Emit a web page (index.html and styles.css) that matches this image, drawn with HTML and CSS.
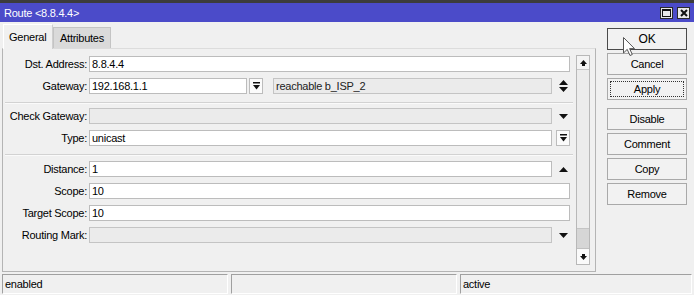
FILE: index.html
```html
<!DOCTYPE html>
<html>
<head>
<meta charset="utf-8">
<title>Route</title>
<link rel="stylesheet" href="styles.css">
</head>
<body>
<div class="window">
  <div class="topstrip"></div>
  <div class="titlebar">
    <span class="title">Route &lt;8.8.4.4&gt;</span>
    <div class="tb-btns">
      <span class="tb-btn"><svg width="9" height="8" viewBox="0 0 9 8"><rect x="0.5" y="0.5" width="8" height="7" fill="none" stroke="#111" stroke-width="1"/><rect x="0" y="0" width="9" height="2" fill="#111"/></svg></span>
      <span class="tb-btn"><svg width="8" height="8" viewBox="0 0 8 8"><path d="M1 1 L7 7 M7 1 L1 7" stroke="#111" stroke-width="2"/></svg></span>
    </div>
  </div>
  <div class="body">
    <div class="left">
      <div class="tabs">
        <div class="tab active">General</div>
        <div class="tab">Attributes</div>
      </div>
      <div class="panel">
        <div class="form">
          <div class="row">
            <label class="lbl">Dst. Address:</label>
            <div class="inp full">8.8.4.4</div>
          </div>
          <div class="row">
            <label class="lbl">Gateway:</label>
            <div class="inp gw">192.168.1.1</div>
            <div class="dd dd-gw"><svg width="7" height="8" viewBox="0 0 7 8"><rect x="0" y="0" width="7" height="1.5" fill="#111"/><path d="M0 3 H7 L3.5 7.5 Z" fill="#111"/></svg></div>
            <div class="inp dis reach">reachable b_ISP_2</div>
            <div class="ico"><svg width="9" height="12" viewBox="0 0 9 12"><path d="M0 5 H9 L4.5 0 Z M0 7 H9 L4.5 12 Z" fill="#111"/></svg></div>
          </div>
          <div class="sep sep1"></div>
          <div class="row">
            <label class="lbl">Check Gateway:</label>
            <div class="inp dis mid"></div>
            <div class="ico"><svg width="9" height="5" viewBox="0 0 9 5"><path d="M0 0 H9 L4.5 5 Z" fill="#111"/></svg></div>
          </div>
          <div class="row">
            <label class="lbl">Type:</label>
            <div class="inp mid">unicast</div>
            <div class="dd dd-type"><svg width="7" height="8" viewBox="0 0 7 8"><rect x="0" y="0" width="7" height="1.5" fill="#111"/><path d="M0 3 H7 L3.5 7.5 Z" fill="#111"/></svg></div>
          </div>
          <div class="sep sep2"></div>
          <div class="row">
            <label class="lbl">Distance:</label>
            <div class="inp mid">1</div>
            <div class="ico"><svg width="9" height="5" viewBox="0 0 9 5"><path d="M0 5 H9 L4.5 0 Z" fill="#111"/></svg></div>
          </div>
          <div class="row">
            <label class="lbl">Scope:</label>
            <div class="inp full">10</div>
          </div>
          <div class="row">
            <label class="lbl">Target Scope:</label>
            <div class="inp full">10</div>
          </div>
          <div class="row">
            <label class="lbl">Routing Mark:</label>
            <div class="inp dis mid"></div>
            <div class="ico"><svg width="9" height="5" viewBox="0 0 9 5"><path d="M0 0 H9 L4.5 5 Z" fill="#111"/></svg></div>
          </div>
        </div>
        <div class="scroll">
          <div class="sb-btn sb-up"><svg width="7" height="6" viewBox="0 0 7 6"><path d="M0 4 H7 L3.5 0 Z" fill="#111"/><rect x="2" y="4" width="3" height="2" fill="#111"/></svg></div>
          <div class="sb-track"></div>
          <div class="sb-thumb"></div>
          <div class="sb-btn sb-down"><svg width="7" height="6" viewBox="0 0 7 6"><rect x="2" y="0" width="3" height="2" fill="#111"/><path d="M0 2 H7 L3.5 6 Z" fill="#111"/></svg></div>
        </div>
      </div>
    </div>
    <div class="btns">
      <button class="btn default">OK</button>
      <button class="btn">Cancel</button>
      <button class="btn focus"><span class="focus-ring">Apply</span></button>
      <button class="btn">Disable</button>
      <button class="btn">Comment</button>
      <button class="btn">Copy</button>
      <button class="btn">Remove</button>
    </div>
  </div>
  <div class="status">
    <div class="seg s1">enabled</div>
    <div class="seg s2"></div>
    <div class="seg s3">active</div>
  </div>
  <svg class="cursor" width="13" height="20" viewBox="0 0 13 20"><path d="M0.5 0.5 L0.5 16 L4.2 12.4 L7 18.5 L9.3 17.5 L6.6 11.6 L11.5 11.6 Z" fill="#fff" stroke="#555" stroke-width="1"/></svg>
</div>
</body>
</html>
```
FILE: styles.css
```css
* { box-sizing: border-box; }
html, body { margin: 0; padding: 0; }
body {
  width: 694px;
  height: 295px;
  overflow: hidden;
  background: #f0f0f0;
  font-family: "Liberation Sans", Arial, sans-serif;
  font-size: 11px;
  letter-spacing: -0.25px;
  color: #000;
}
.window { position: relative; display: flex; flex-direction: column; height: 295px; }
.topstrip { height: 3px; background: #3c3c3c; }
.titlebar {
  height: 19px;
  background: #4b4bc9;
  color: #fff;
  display: flex;
  align-items: center;
  padding-left: 4px;
  font-size: 11px;
}
.title { flex: 1; }
.tb-btns { display: flex; gap: 4px; padding-right: 4px; }
.tb-btn {
  width: 13px; height: 12px;
  background: #e8e8e8;
  border: 1px solid #2a2a2a;
  display: flex; align-items: center; justify-content: center;
}
.body { display: flex; height: 250px; }
.left { width: 596px; padding-left: 2px; display: flex; flex-direction: column; }
.tabs { height: 26px; display: flex; align-items: flex-end; padding-left: 1px; }
.tab {
  height: 21px;
  padding: 0 6px;
  display: flex; align-items: center;
  background: #dadada;
  border: 1px solid #c4c4c4;
  border-bottom: none;
}
.tab.active {
  height: 25px;
  width: 50px;
  background: #f0f0f0;
  border-color: #fff #cfcfcf #fff #fff;
  margin-bottom: -1px;
  position: relative;
  z-index: 1;
  padding: 0 5px;
}
.panel {
  flex: 1;
  border: 1px solid #b4b4b4;
  border-top-color: #dcdcdc;
  display: flex;
  padding: 6px 5px 6px 0;
}
.form { width: 573px; padding-top: 1px; display: flex; flex-direction: column; gap: 6px; }
.row { display: flex; height: 16px; }
.lbl { width: 84px; margin-right: 2px; text-align: right; line-height: 16px; white-space: nowrap; }
.inp {
  height: 16px;
  border: 1px solid #bcbcbc;
  background: #fff;
  padding-left: 2px;
  line-height: 14px;
  white-space: nowrap;
  overflow: hidden;
}
.inp.full { width: 481px; }
.inp.mid { width: 463px; }
.inp.gw { width: 158px; }
.inp.reach { width: 279px; margin-left: 10px; }
.inp.dis { background: #ebebeb; border-color: #c4c4c4; color: #222; }
.ico { width: 23px; display: flex; align-items: center; justify-content: center; }
.dd {
  width: 14px; height: 16px;
  border: 1px solid #bcbcbc;
  background: #fbfbfb;
  display: flex; align-items: center; justify-content: center;
}
.dd-gw { margin-left: 2px; }
.dd-type { margin-left: 4px; }
.sep { height: 2px; border-top: 1px solid #d2d2d2; border-bottom: 1px solid #fafafa; width: 568px; margin-left: 2px; }
.sep1 { margin-top: 2px; margin-bottom: -2px; }
.sep2 { margin-top: 2px; margin-bottom: -1px; }
.scroll {
  width: 14px;
  height: 210px;
  border: 1px solid #b8b8b8;
  display: flex; flex-direction: column;
  background: #ececec;
}
.sb-btn { display: flex; align-items: center; justify-content: center; background: #f4f4f4; }
.sb-up { height: 14px; border-bottom: 1px solid #c8c8c8; }
.sb-down { height: 16px; border-top: 1px solid #c0c0c0; background: #fafafa; }
.sb-track { flex: 1; }
.sb-thumb { height: 20px; background: #d6d6d6; border-top: 1px solid #c4c4c4; }
.btns { margin-left: 11px; padding-top: 6px; display: flex; flex-direction: column; gap: 3px; }
.btn {
  width: 80px; height: 22px;
  border: 1px solid #a9a9a9;
  background: #f2f2f2;
  font-family: inherit;
  font-size: 11px;
  letter-spacing: -0.25px;
  color: #000;
  padding: 0;
  display: flex; align-items: center; justify-content: center;
}
.btn.default { border-color: #4a4a4a; font-size: 12px; }
.btn.focus { margin-bottom: 5px; padding: 2px; }
.focus-ring {
  width: 100%; height: 100%;
  border: 1px dotted #333;
  display: flex; align-items: center; justify-content: center;
}
.status { margin-top: 2px; height: 20px; display: flex; gap: 3px; padding-left: 2px; }
.seg {
  height: 20px;
  border-top: 1px solid #a0a0a0;
  border-left: 1px solid #a0a0a0;
  border-bottom: 1px solid #fff;
  border-right: 1px solid #fff;
  padding-left: 2px;
  line-height: 18px;
}
.s1 { width: 226px; }
.s2 { width: 226px; }
.s3 { width: 232px; }
.cursor { position: absolute; left: 623px; top: 37px; }
```
